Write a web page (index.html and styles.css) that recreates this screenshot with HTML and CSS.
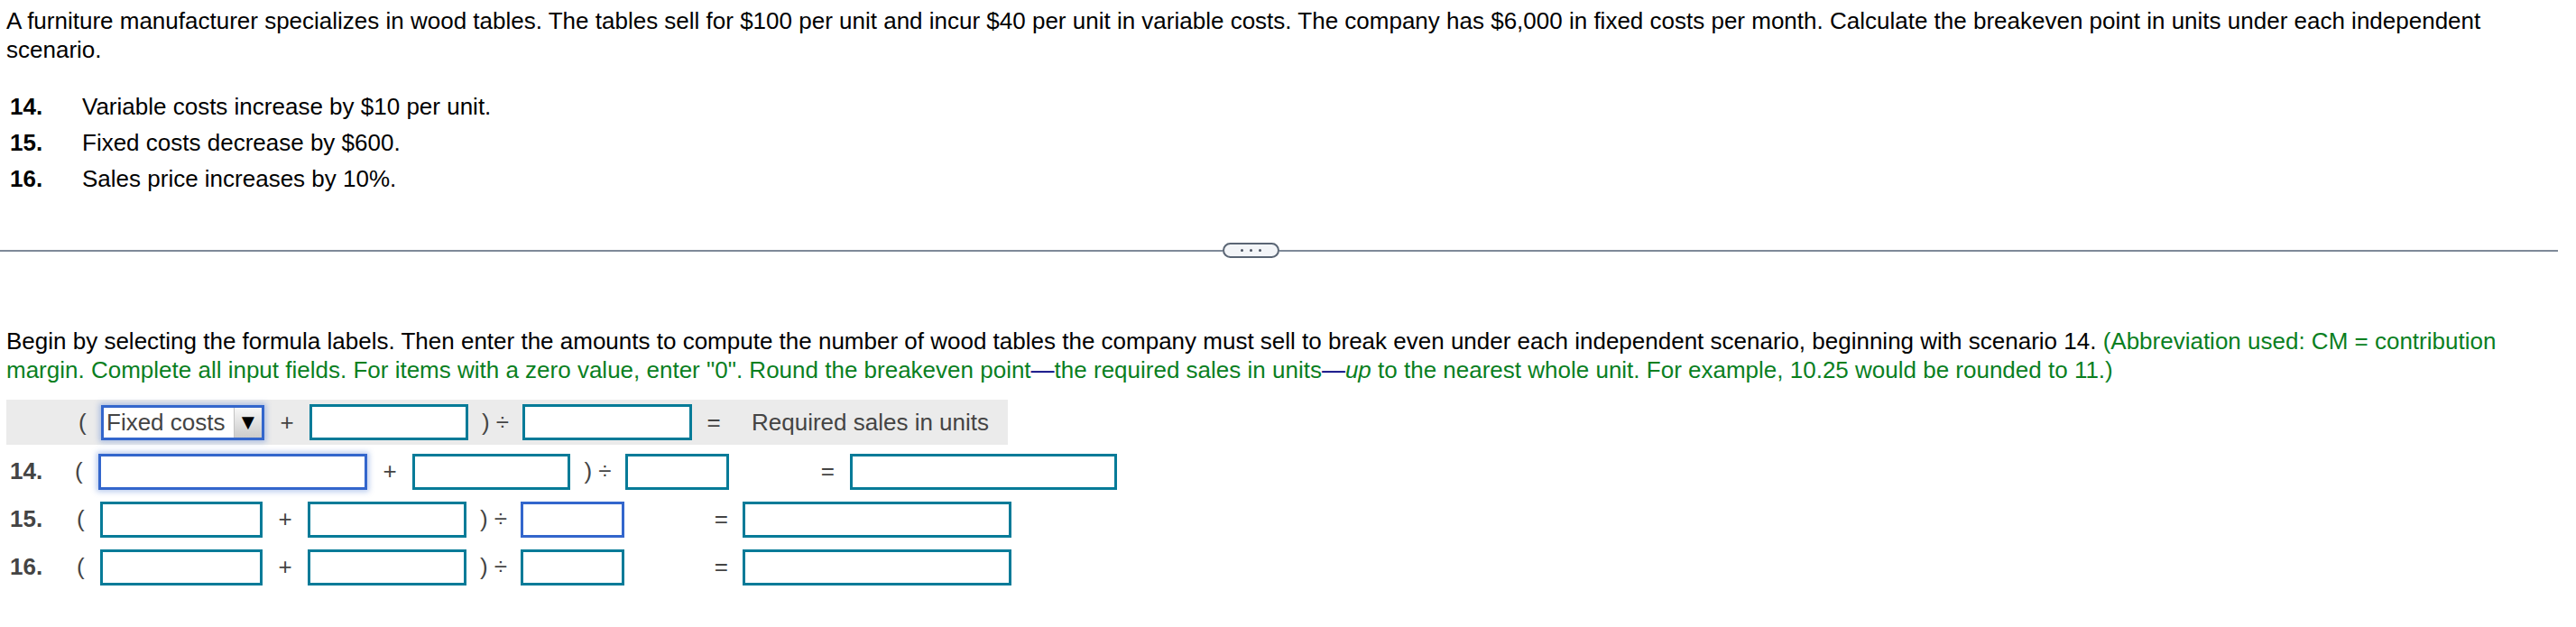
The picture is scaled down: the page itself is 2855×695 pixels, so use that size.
FILE: index.html
```html
<!DOCTYPE html>
<html lang="en">
<head>
<meta charset="utf-8">
<title>Breakeven</title>
<link rel="stylesheet" href="styles.css">
</head>
<body>
<div class="page">
  <p class="intro">A furniture manufacturer specializes in wood tables. The tables sell for $100 per unit and incur $40 per unit in variable costs. The company has $6,000 in fixed costs per month. Calculate the breakeven point in units under each independent scenario.</p>

  <ol class="scenarios">
    <li><span class="num">14.</span><span>Variable costs increase by $10 per unit.</span></li>
    <li><span class="num">15.</span><span>Fixed costs decrease by $600.</span></li>
    <li><span class="num">16.</span><span>Sales price increases by 10%.</span></li>
  </ol>

  <div class="divider">
    <span class="rule rule-left"></span>
    <span class="pill"><i></i><i></i><i></i></span>
    <span class="rule rule-right"></span>
  </div>

  <p class="instructions">Begin by selecting the formula labels. Then enter the amounts to compute the number of wood tables the company must sell to break even under each independent scenario, beginning with scenario 14. <span class="green">(Abbreviation used: CM = contribution margin. Complete all input fields. For items with a zero value, enter "0". Round the breakeven point<span class="dash">—</span>the required sales in units<span class="dash">—</span><em>up</em> to the nearest whole unit. For example, 10.25 would be rounded to 11.)</span></p>

  <div class="grid">
    <div class="row head">
      <span class="c-label"></span>
      <span class="c-paren p-head">(</span>
      <span class="select"><span class="sel-text">Fixed costs</span><span class="sel-btn">▼</span></span>
      <span class="c-op">+</span>
      <input class="box w176" type="text">
      <span class="c-op w60">) ÷</span>
      <input class="box w188" type="text">
      <span class="c-eq eq-head">=</span>
      <span class="c-result">Required sales in units</span>
    </div>

    <div class="row">
      <span class="c-label">14.</span>
      <span class="c-paren p-14">(</span>
      <input class="box focus w298" type="text">
      <span class="c-op">+</span>
      <input class="box w175" type="text">
      <span class="c-op w61">) ÷</span>
      <input class="box w115" type="text">
      <span class="c-eq eq-14">=</span>
      <input class="box w296" type="text">
    </div>

    <div class="row">
      <span class="c-label">15.</span>
      <span class="c-paren">(</span>
      <input class="box w180" type="text">
      <span class="c-op">+</span>
      <input class="box w176" type="text">
      <span class="c-op w60">) ÷</span>
      <input class="box blue w115" type="text">
      <span class="c-eq">=</span>
      <input class="box w298" type="text">
    </div>

    <div class="row">
      <span class="c-label">16.</span>
      <span class="c-paren">(</span>
      <input class="box w180" type="text">
      <span class="c-op">+</span>
      <input class="box w176" type="text">
      <span class="c-op w60">) ÷</span>
      <input class="box w115" type="text">
      <span class="c-eq">=</span>
      <input class="box w298" type="text">
    </div>
  </div>
</div>
</body>
</html>
```

FILE: styles.css
```css
* { box-sizing: border-box; }

html, body {
  margin: 0;
  padding: 0;
  background: #fff;
}

body {
  font-family: "Liberation Sans", Arial, sans-serif;
  font-size: 26px;
  color: #000;
}

.page {
  padding: 7px 0 0 7px;
}

.intro {
  margin: 0;
  line-height: 32px;
}

.scenarios {
  list-style: none;
  margin: 27px 0 0 0;
  padding: 0;
}

.scenarios li {
  display: flex;
  line-height: 40px;
}

.scenarios .num {
  font-weight: bold;
  width: 84px;
  padding-left: 4px;
}

.divider {
  display: flex;
  align-items: center;
  height: 17px;
  margin: 51px 20px 0 -7px;
}

.rule {
  height: 2px;
  background: #7e8998;
}

.rule-left { width: 1355px; }
.rule-right { flex: 1; }

.pill {
  width: 63px;
  height: 17px;
  border: 2px solid #5a6574;
  border-radius: 9px;
  background: #f3f5f8;
  display: flex;
  align-items: center;
  justify-content: center;
  gap: 7px;
}

.pill i {
  width: 3px;
  height: 3px;
  border-radius: 50%;
  background: #4a5260;
}

.instructions {
  margin: 76px 0 0 0;
  line-height: 32px;
  padding-right: 20px;
}

.green { color: #0a7f1f; }
.dash { color: #000080; }
.instructions em { font-style: italic; }

.grid {
  margin-top: 17px;
  color: #444;
}

.row {
  display: flex;
  align-items: center;
  height: 53px;
}

.row.head {
  height: 50px;
  width: 1110px;
  background: #ebebeb;
  margin-bottom: 3px;
}

.c-label {
  width: 68px;
  padding-left: 4px;
  font-weight: bold;
}

.c-paren {
  width: 36px;
  padding-left: 10px;
}

.c-paren.p-14 { width: 34px; padding-left: 8px; }
.c-paren.p-head { width: 37px; padding-left: 12px; }

.c-op {
  width: 50px;
  text-align: center;
}

.c-op.w60 { width: 60px; }
.c-op.w61 { width: 61px; }

.c-eq {
  width: 131px;
  text-align: right;
  padding-right: 16px;
}

.c-eq.eq-14 { width: 134px; padding-right: 17px; }
.c-eq.eq-head { width: 48px; text-align: center; padding-right: 0; }

.c-result {
  padding-left: 18px;
}

.box {
  display: block;
  height: 40px;
  margin: 0;
  padding: 0 6px;
  border: 3px solid #067b98;
  border-radius: 0;
  background: #fff;
  font: inherit;
  outline: none;
}

.box.blue { border-color: #3366cc; }

.box.focus {
  border-color: #3366cc;
  box-shadow: 0 0 6px 2px rgba(51, 102, 204, 0.35);
}

.w115 { width: 115px; }
.w175 { width: 175px; }
.w176 { width: 176px; }
.w180 { width: 180px; }
.w188 { width: 188px; }
.w296 { width: 296px; }
.w298 { width: 298px; }

.select {
  display: flex;
  width: 181px;
  height: 39px;
  border: 3px solid #3366cc;
  background: #fff;
  box-shadow: 0 0 6px 2px rgba(51, 102, 204, 0.35);
}

.sel-text {
  flex: 1;
  padding-left: 3px;
  line-height: 33px;
  color: #444;
  white-space: nowrap;
}

.sel-btn {
  width: 31px;
  border-left: 1px solid #c4c4c4;
  background: linear-gradient(#f7f7f7, #cbcbcb);
  color: #000;
  font-size: 24px;
  line-height: 1;
  display: flex;
  align-items: center;
  justify-content: center;
}
```
